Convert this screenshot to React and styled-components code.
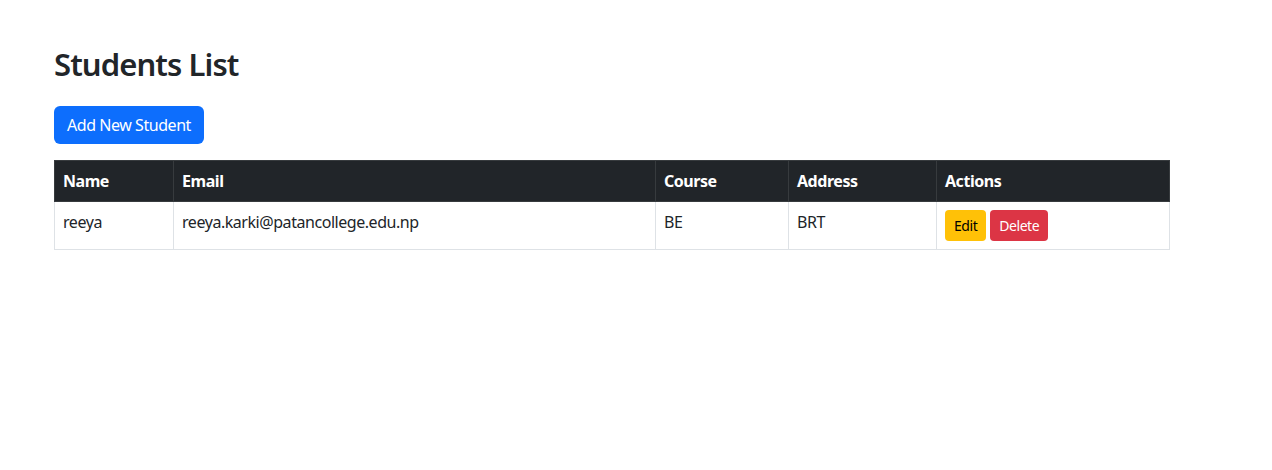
import React from "react";
import styled, { createGlobalStyle } from "styled-components";

const Global = createGlobalStyle`
  * { box-sizing: border-box; }
  body {
    margin: 0;
    background: #fff;
    color: #212529;
    font-family: "Noto Sans", "Open Sans", sans-serif;
    font-size: 16px;
    line-height: 1.5;
    letter-spacing: -0.45px;
  }
`;

const Container = styled.div`
  width: 1116px;
  margin-left: 54px;
  padding-top: 46px;
`;

const Title = styled.h2`
  margin: 0 0 23px;
  font-size: 31px;
  font-weight: 600;
  line-height: 1.2;
  letter-spacing: -0.9px;
  color: #212529;
`;

const Button = styled.button`
  font-family: inherit;
  letter-spacing: inherit;
  border: 1px solid transparent;
  cursor: pointer;
  background: ${(p) => p.$bg};
  color: ${(p) => p.$fg};
  font-size: ${(p) => (p.$small ? "14px" : "16px")};
  line-height: ${(p) => (p.$small ? "21px" : "24px")};
  padding: ${(p) => (p.$small ? "4px 8px" : "6px 12px")};
  border-radius: ${(p) => (p.$small ? "4px" : "6px")};
`;

const Table = styled.table`
  margin-top: 16px;
  width: 1116px;
  border-collapse: collapse;
  table-layout: fixed;
  vertical-align: top;
`;

const Th = styled.th`
  background: #212529;
  color: #fff;
  text-align: left;
  font-weight: 700;
  padding: 8px;
  border: 1px solid #373b3e;
  line-height: 24px;
`;

const Td = styled.td`
  padding: 8px;
  border: 1px solid #dee2e6;
  line-height: 24px;
  vertical-align: top;
`;

const Actions = styled.div`
  display: flex;
  gap: 4px;
`;

export default function App() {
  return (
    <>
      <Global />
      <Container>
        <Title>Students List</Title>
        <Button $bg="#0d6efd" $fg="#fff">Add New Student</Button>
        <Table>
          <colgroup>
            <col style={{ width: 119 }} />
            <col style={{ width: 482 }} />
            <col style={{ width: 133 }} />
            <col style={{ width: 148 }} />
            <col style={{ width: 233 }} />
          </colgroup>
          <thead>
            <tr>
              <Th>Name</Th>
              <Th>Email</Th>
              <Th>Course</Th>
              <Th>Address</Th>
              <Th>Actions</Th>
            </tr>
          </thead>
          <tbody>
            <tr>
              <Td>reeya</Td>
              <Td>reeya.karki@patancollege.edu.np</Td>
              <Td>BE</Td>
              <Td>BRT</Td>
              <Td>
                <Actions>
                  <Button $small $bg="#ffc107" $fg="#000">Edit</Button>
                  <Button $small $bg="#dc3545" $fg="#fff">Delete</Button>
                </Actions>
              </Td>
            </tr>
          </tbody>
        </Table>
      </Container>
    </>
  );
}
